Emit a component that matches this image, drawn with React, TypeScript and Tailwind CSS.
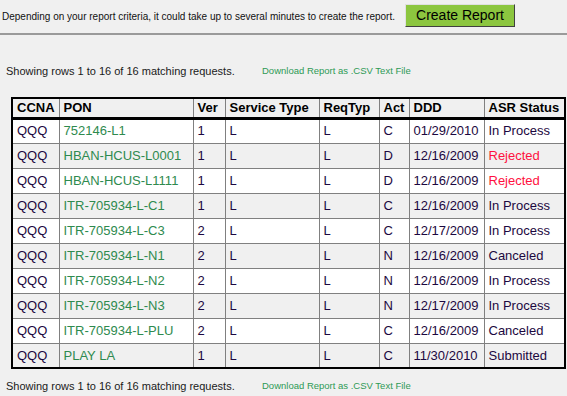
const rows = [
  ["QQQ", "752146-L1", "1", "L", "L", "C", "01/29/2010", "In Process"],
  ["QQQ", "HBAN-HCUS-L0001", "1", "L", "L", "D", "12/16/2009", "Rejected"],
  ["QQQ", "HBAN-HCUS-L1111", "1", "L", "L", "D", "12/16/2009", "Rejected"],
  ["QQQ", "ITR-705934-L-C1", "1", "L", "L", "C", "12/16/2009", "In Process"],
  ["QQQ", "ITR-705934-L-C3", "2", "L", "L", "C", "12/17/2009", "In Process"],
  ["QQQ", "ITR-705934-L-N1", "2", "L", "L", "N", "12/16/2009", "Canceled"],
  ["QQQ", "ITR-705934-L-N2", "2", "L", "L", "N", "12/16/2009", "In Process"],
  ["QQQ", "ITR-705934-L-N3", "2", "L", "L", "N", "12/17/2009", "In Process"],
  ["QQQ", "ITR-705934-L-PLU", "2", "L", "L", "C", "12/16/2009", "Canceled"],
  ["QQQ", "PLAY LA", "1", "L", "L", "C", "11/30/2010", "Submitted"],
]

const headers = ["CCNA", "PON", "Ver", "Service Type", "ReqTyp", "Act", "DDD", "ASR Status"]
const widths = ["w-[47px]", "w-[134px]", "w-[32px]", "w-[94px]", "w-[60px]", "w-[30px]", "w-[75px]", "w-[81px]"]

function Summary() {
  return (
    <div className="flex items-center h-[14px]">
      <span className="ml-[6px] w-[256px] text-[11px] text-[#1a1a1a]">
        Showing rows 1 to 16 of 16 matching requests.
      </span>
      <a className="text-[9.5px] text-[#2e9a55]">Download Report as .CSV Text File</a>
    </div>
  )
}

export default function App() {
  return (
    <main className="w-[567px] h-[396px] bg-[#f0f0f0] overflow-hidden font-['Liberation_Sans',Arial,sans-serif]">

      {/* top bar */}
      <div className="flex items-center h-[30px] pl-[2px]">
        <p className="w-[403px] text-[10px] text-[#111] pt-[2px]">
          Depending on your report criteria, it could take up to several minutes to create the report.
        </p>
        <button className="w-[110px] h-[23px] bg-[#8cc63f] border border-t-[#e0e0e0] border-l-[#e0e0e0] border-r-[#404040] border-b-[#404040] text-[14px] text-black">
          Create Report
        </button>
      </div>
      <div className="mt-[3px] border-t-2 border-[#9a9a9a]" />

      {/* summary */}
      <div className="mt-[29px]">
        <Summary />
      </div>

      {/* results */}
      <table className="mt-[19px] ml-[11px] w-[553px] table-fixed border-collapse border-2 border-black text-[13px] text-[#1c0840]">
        <colgroup>
          {widths.map((w, i) => <col key={i} className={w} />)}
        </colgroup>
        <thead>
          <tr className="h-[20px]">
            {headers.map(h => (
              <th key={h} className="border border-[#808080] border-b-[3px] border-b-black px-[4px] text-left font-bold text-black leading-none">
                {h}
              </th>
            ))}
          </tr>
        </thead>
        <tbody>
          {rows.map((r, i) => (
            <tr key={i} className={i % 2 === 0 ? "h-[25px] bg-white" : "h-[25px] bg-[#f0f0f0]"}>
              {r.map((c, j) => (
                <td
                  key={j}
                  className={
                    "border border-[#808080] px-[4px] whitespace-nowrap " +
                    (j === 1 ? "text-[#2e8a4e]" : j === 7 && c === "Rejected" ? "text-[#ff1040]" : "")
                  }
                >
                  {c}
                </td>
              ))}
            </tr>
          ))}
        </tbody>
      </table>

      <div className="mt-[10px]">
        <Summary />
      </div>

    </main>
  )
}
